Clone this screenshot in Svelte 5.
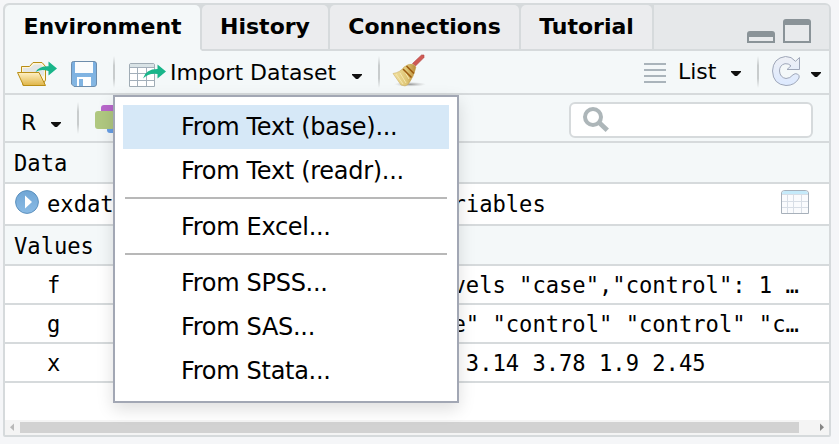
<script>
  const tabs = [
    { label: 'Environment', width: 197 },
    { label: 'History', width: 128 },
    { label: 'Connections', width: 191 },
    { label: 'Tutorial', width: 133 }
  ];
  const groups = [
    ['From Text (base)...', 'From Text (readr)...'],
    ['From Excel...'],
    ['From SPSS...', 'From SAS...', 'From Stata...']
  ];
  const values = [
    { name: 'f', value: 'Factor w/ 2 levels "case","control": 1 …' },
    { name: 'g', value: 'chr [1:5] "case" "control" "control" "c…' },
    { name: 'x', value: 'num [1:5] 2.31 3.14 3.78 1.9 2.45' }
  ];
</script>

{#snippet caret()}
  <svg class="caret" width="12" height="8" viewBox="0 0 12 8"><path d="M1 1H11V2L7 6H5L1 2Z" fill="#111" /></svg>
{/snippet}

<div class="page">
  <div class="pane">
    <div class="tabs">
      {#each tabs as tab, i}
        <div class="tab" class:active={i === 0} style="width:{tab.width}px"><span>{tab.label}</span></div>
      {/each}
      <div class="window">
        <svg width="66" height="28" viewBox="746 18 66 28">
          <path d="M747 43V34Q747 31 750 31H772Q775 31 775 34V43Z" fill="#8a9398" /><path d="M749 37H773V41H749Z" fill="#e8eaec" />
          <path d="M783 43V22Q783 19 786 19H808Q811 19 811 22V43Z" fill="#8a9398" /><path d="M785 25H809V41H785Z" fill="#e8eaec" />
        </svg>
      </div>
    </div>

    <div class="toolbar">
      <svg width="95" height="42" viewBox="15 51 95 42">
        <defs>
          <linearGradient id="gold" x2="0" y2="1"><stop stop-color="#fff1c4" /><stop offset="1" stop-color="#dfb548" /></linearGradient>
          <linearGradient id="disk" x2="0" y2="1"><stop stop-color="#79aee0" /><stop offset="1" stop-color="#84b7e3" /></linearGradient>
        </defs>
        <path d="M21.5 72V66.5H29.5L33 62.5H42L45.5 66.5V80L42.5 85.5H23Z" fill="#fff6d8" stroke="#b98e16" stroke-linejoin="round" />
        <path d="M23 72V68H30L34 64.500H41L44 68V76Z" fill="#e3e6e5" />
        <path d="M17.500 72.500H39L45.500 85.500H23.500Z" fill="url(#gold)" stroke="#b98e16" stroke-linejoin="round" />
        <path d="M35.500 72Q39 66 48.500 66.200V61.500L57 68.500L48.500 75.500V71Q41 68.500 35.500 72Z" fill="#19b58a" />
        <path d="M73.500 61.500H94Q96.500 61.500 96.500 64V84Q96.500 86.500 94 86.500H74L71.500 84V63.500Q71.500 61.500 73.500 61.500Z" fill="url(#disk)" stroke="#6d8dac" />
        <path d="M75 62H93V73H75Z" fill="#fafcfd" /><path d="M77 77H91V86H77Z" fill="#fff" /><path d="M79 79H83V86H79Z" fill="#80b4e2" />
      </svg>
      <span class="sep"></span>
      <svg class="import-icon" width="40" height="42" viewBox="128 51 40 42">
        <path d="M129.500 86.500V65Q129.500 63.500 131 63.500H153Q154.500 63.500 154.500 65V86.500Z" fill="#fff" stroke="#a0acb5" />
        <path d="M130 67V64H154V67Z" fill="#d9e3e6" />
        <path d="M130 67.500H154M130 73.500H154M130 80.500H154M137.500 67V86M146.500 67V86" stroke="#a3afba" fill="none" />
        <path d="M143 78.500Q145.500 69 157.500 69V64.500L166 71.500L157.500 78.500V74Q149 72.500 143 78.500Z" fill="#19b58a" />
      </svg>
      <span class="label import">Import Dataset</span>
      <span class="import-caret">{@render caret()}</span>
      <span class="sep import-sep"></span>
      <svg class="broom" width="36" height="42" viewBox="391 51 36 42">
        <defs><linearGradient id="straw"><stop stop-color="#f2e2a2" /><stop offset=".6" stop-color="#dec575" /><stop offset="1" stop-color="#b98a37" /></linearGradient><radialGradient id="shade"><stop stop-color="#777" stop-opacity=".75" /><stop offset="1" stop-color="#aaa" stop-opacity="0" /></radialGradient></defs>
        <ellipse cx="410" cy="84.300" rx="16" ry="2.400" fill="url(#shade)" />
        <path d="M421.500 55H424V57.500L415.500 66L412.500 63.500Z" fill="#cf5a54" stroke="#b34646" stroke-width=".6" />
        <path d="M413.500 64.500L416 67Q414 77 408 84.500L405 86L401 85L393 73.500Q400 72.500 404 67Q409 63 413.500 64.500Z" fill="url(#straw)" stroke="#c7a455" stroke-width=".5" />
        <path d="M396 74L403 84M400 73L406 83M404 70L409 79" stroke="#f5e6ae" fill="none" />
        <path d="M403 69L411.500 77.500M406.500 66L414 73.500" stroke="#9c5c10" stroke-width="1.600" />
      </svg>
      <span class="grow"></span>
      <svg width="24" height="42" viewBox="643 51 24 42"><path d="M644 64H666M644 70H666M644 76H666M644 82H666" stroke="#aab4bb" stroke-width="2" /></svg>
      <span class="label list">List</span>
      <span class="list-caret">{@render caret()}</span>
      <span class="sep list-sep"></span>
      <svg class="refresh" width="32" height="42" viewBox="770 51 32 42">
        <defs><linearGradient id="ref" x2="0" y2="1"><stop stop-color="#eef0f5" /><stop offset="1" stop-color="#dce9ff" /></linearGradient></defs>
        <path d="M799.500 57.500V69.500H787L791 65.800Q788.500 63.300 785 63.700Q779.500 65 779.500 71Q780 77.500 786 78.500Q790 78.500 793 74.800Q795 73 797.500 74Q800 75.500 799 78Q795 85.500 786 85.500Q773 84.500 772.500 71Q773 58 785.500 56.500Q791.500 56.300 795.500 61.300Z" fill="url(#ref)" stroke="#9fa7b9" stroke-linejoin="round" />
      </svg>
      <span class="refresh-caret">{@render caret()}</span>
    </div>

    <div class="toolbar filter">
      <span class="label lang">R</span>
      <span class="lang-caret">{@render caret()}</span>
      <span class="sep lang-sep"></span>
      <svg class="cube" width="34" height="46" viewBox="94 95 34 46">
        <rect x="101" y="105" width="20" height="20" rx="3" fill="#b867cb" /><rect x="107" y="115" width="18" height="18" rx="3" fill="#689fe6" /><rect x="95" y="111" width="20" height="18" rx="3" fill="#b0c880" />
      </svg>
      <span class="grow"></span>
      <div class="search">
        <svg width="28" height="28" viewBox="582 108 28 28"><circle cx="593" cy="120" r="8" fill="none" stroke="#adb6b9" stroke-width="4" /><path d="M599 125.500L607.300 133.300" stroke="#adb6b9" stroke-width="4.800" /></svg>
      </div>
    </div>

    <div class="heading data">Data</div>
    <div class="row object">
      <svg class="play" width="26" height="26" viewBox="14 189 26 26">
        <defs><linearGradient id="ball" x2="0" y2="1"><stop stop-color="#70a6d5" /><stop offset="1" stop-color="#8abbe5" /></linearGradient></defs>
        <circle cx="27" cy="202" r="11.400" fill="url(#ball)" stroke="#5c90bd" /><path d="M25 195.500L32 202L25 208.500Z" fill="#fff" />
      </svg>
      <span class="name">exdata</span><span class="value">8 obs. of 3 variables</span>
      <svg class="grid" width="30" height="26" viewBox="779 189 30 26">
        <path d="M780.500 213.500V193Q780.500 190.500 784 190.500H804Q807.500 190.500 807.500 193V213.500Z" fill="#fafbfd" stroke="#a7b0ba" />
        <path d="M781 194Q781 191 784 191H804Q807 191 807 194Z" fill="#c5eafa" />
        <path d="M781 194.500H807M781 201.500H807M781 207.500H807M786.500 195V213M792.500 195V213M800.500 195V213" stroke="#d8dee6" fill="none" />
      </svg>
    </div>
    <div class="heading values">Values</div>
    {#each values as v}
      <div class="row"><span class="name plain">{v.name}</span><span class="value">{v.value}</span></div>
    {/each}
    <div class="blank"></div>
    <div class="scroll">
      <svg width="15" height="15" viewBox="5 420 15 15"><path d="M14 423.500V431L10 427.300Z" fill="#b9b9b9" /></svg>
      <div class="thumb"></div>
      <svg width="30" height="15" viewBox="799 420 30 15"><path d="M820 423.500V431L824 427.300Z" fill="#858585" /></svg>
    </div>
  </div>

  <div class="menu">
    {#each groups as group, g}
      {#if g > 0}<div class="rule"></div>{/if}
      {#each group as item, i}
        <div class="item" class:selected={g === 0 && i === 0}>{item}</div>
      {/each}
    {/each}
  </div>
</div>

<style>
  .page { position: relative; box-sizing: border-box; width: 839px; height: 444px; padding: 3px; background: #f5f6f8; overflow: hidden; font: 22px 'DejaVu Sans', sans-serif; color: #000; }
  .page :global(svg) { display: block; flex: none; }
  .pane { box-sizing: border-box; width: 828px; height: 434px; border: 2px solid #d6dadc; border-radius: 6px 6px 2px 2px; background: #fff; overflow: hidden; }
  .tabs { display: flex; height: 46px; background: #d6dadc; }
  .tab { box-sizing: border-box; height: 46px; border-right: 2px solid #d6dadc; border-bottom: 2px solid #d6dadc; flex: none; display: flex; font-weight: bold; }
  .tab span { flex: 1; display: flex; align-items: center; justify-content: center; padding-bottom: 2px; background: #ebecee; border-radius: 5px 5px 0 0; }
  .tab.active { border-bottom-color: #f4f8f9; }
  .tab.active span { background: #f4f8f9; }
  .window { flex: 1; display: flex; justify-content: flex-end; padding: 13px 17px 0 0; background: #e6e8ea; border-bottom: 2px solid #d6dadc; }
  .toolbar { box-sizing: border-box; height: 44px; display: flex; align-items: center; padding: 0 7px 0 10px; background: #f4f8f9; border-bottom: 2px solid #d6dadc; }
  .label { line-height: 26px; white-space: nowrap; }
  .grow { flex: 1; }
  .sep { flex: none; width: 2px; height: 32px; margin-left: 3px; background: linear-gradient(#f4f8f900, #c8cccd 30%, #c8cccd 70%, #f4f8f900); }
  .import-icon { margin-left: 13px; }
  .import { width: 168px; padding: 2px 0 0 2px; }
  .import-caret { margin: 9px 0 0 13px; }
  .import-sep { margin-left: 15px; }
  .broom { margin-left: 11px; }
  .list { width: 40px; margin-left: 11px; }
  .list-caret { margin: 4px 0 0 12px; }
  .list-sep { margin-left: 15px; }
  .refresh { margin-left: 11px; }
  .refresh-caret { margin: 5px 0 0 8px; }
  .filter { height: 48px; padding-right: 16px; }
  .lang { margin: 9px 0 0 6px; width: 16px; }
  .lang-caret { margin: 14px 0 0 13px; }
  .lang-sep { margin-left: 15px; }
  .cube { margin-left: 15px; }
  .search { box-sizing: border-box; width: 244px; height: 36px; margin-top: 8px; padding: 1px 11px; margin-bottom: 4px; border: 2px solid #d6dadc; border-radius: 6px; background: #fff; }
  .heading, .row { box-sizing: border-box; display: flex; align-items: center; border-bottom: 2px solid #d6dadc; font: 22.145px 'DejaVu Sans Mono', monospace; line-height: 26px; white-space: pre; }
  .heading { padding: 1px 0 0 9px; background: #f4f8f9; }
  .data { height: 41px; }
  .values { height: 40px; }
  .row { height: 39px; padding-left: 9px; }
  .object { height: 42px; }
  .play { margin-top: -4px; }
  .name { width: 217px; margin-left: 7px; }
  .plain { margin-left: 33px; }
  .value { margin-left: 0; padding-left: 2px; }
  .grid { margin: -4px 0 0 234px; }
  .blank { height: 37px; }
  .scroll { height: 15px; display: flex; background: #f4f4f4; }
  .thumb { width: 779px; height: 11px; margin-top: 2px; background: #d2d2d2; }
  .menu { position: absolute; left: 113px; top: 95px; box-sizing: border-box; width: 346px; height: 308px; padding: 8px; border: 2px solid #a2a7b4; background: #fff; box-shadow: 0 6px 16px #0002; font-size: 24px; letter-spacing: -.3px; }
  .item { height: 44px; line-height: 44px; padding-left: 58px; white-space: nowrap; }
  .selected { background: #d6e8f7; }
  .rule { height: 2px; margin: 4px 2px 6px; background: #b8b8b8; }
</style>
